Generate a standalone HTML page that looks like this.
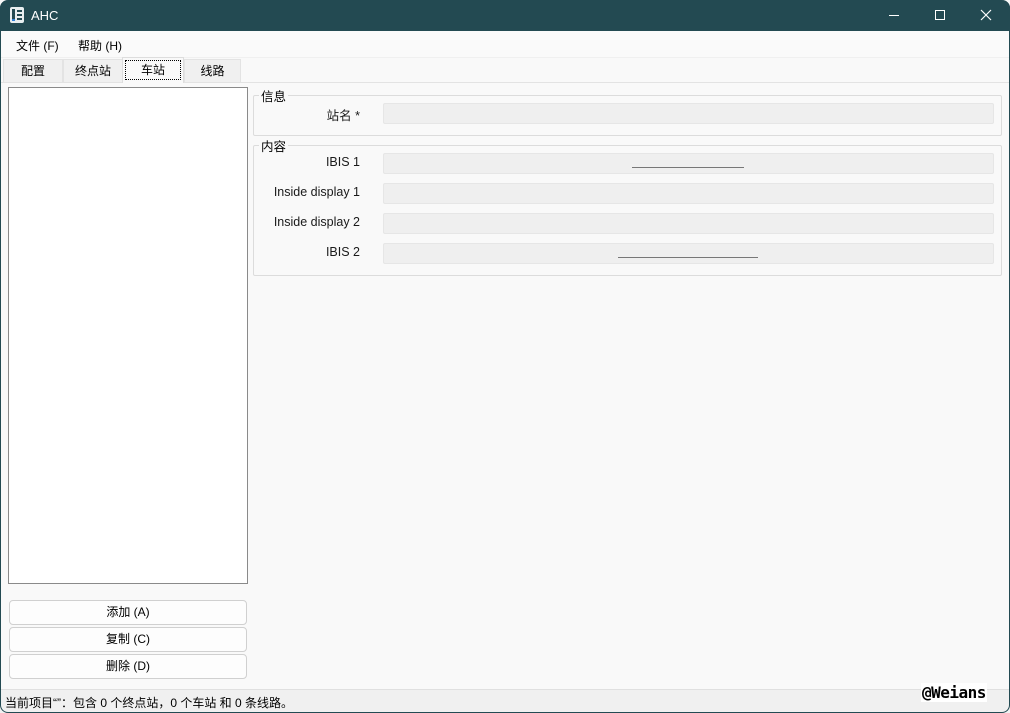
<!DOCTYPE html>
<html><head><meta charset="utf-8"><style>
*{box-sizing:border-box;margin:0;padding:0}
body{width:1010px;height:713px;overflow:hidden;background:#f9f9f9;font-family:"Liberation Sans","Noto Sans CJK SC",sans-serif;font-size:12px;color:#000;position:relative}
.a{position:absolute}
.title{left:0;top:0;width:1010px;height:31px;background:#234a52;color:#fff;border-radius:8px 8px 0 0}
.tab{top:59px;height:23px;background:#f0f0f0;border:1px solid #e3e3e3;border-bottom:none;text-align:center;line-height:22px;font-size:12px}
.field{left:383px;width:611px;height:21px;background:#efefef;border:1px solid #e6e6e6;border-radius:2px}
.lbl{width:110px;left:250px;text-align:right;font-size:12.5px;color:#1a1a1a}
.grp{left:253px;width:749px;border:1px solid #dcdcdc;border-radius:2px}
.gt{background:#f9f9f9;padding:0 2px;font-size:12.5px}
.btn{left:9px;width:238px;height:25px;background:#fdfdfd;border:1px solid #d0d0d0;border-radius:4px;text-align:center;line-height:23px;font-size:12px}
</style></head><body>
<div class="a title">
 <svg class="a" style="left:10px;top:7px" width="14" height="16" viewBox="0 0 14 16"><rect x="0" y="0" width="14" height="16" rx="2" fill="#e8eef0"/><rect x="2" y="2" width="3" height="12" fill="#234a52"/><rect x="7" y="3" width="5" height="2" fill="#234a52"/><rect x="7" y="7" width="5" height="2" fill="#234a52"/><rect x="7" y="11" width="5" height="2" fill="#234a52"/><rect x="2" y="12" width="3" height="2" fill="#2f7fd8"/></svg>
 <div class="a" style="left:31px;top:8px;font-size:13px">AHC</div>
 <div class="a" style="left:889px;top:15px;width:10px;height:1px;background:#fff"></div>
 <div class="a" style="left:935px;top:10px;width:10px;height:10px;border:1px solid #fff"></div>
 <svg class="a" style="left:980px;top:9px" width="12" height="12"><path d="M1 1L11 11M11 1L1 11" stroke="#fff" stroke-width="1.2"/></svg>
</div>
<div class="a" style="left:0;top:31px;width:1010px;height:26px;background:#fafafa"></div>
<div class="a" style="left:16px;top:37px;font-size:12px">文件 (F)</div>
<div class="a" style="left:78px;top:37px;font-size:12px">帮助 (H)</div>
<div class="a" style="left:0;top:57px;width:1010px;height:1px;background:#f0f0f0"></div>
<div class="a" style="left:0;top:82px;width:1010px;height:1px;background:#e3e3e3"></div>
<div class="a tab" style="left:3px;width:60px">配置</div>
<div class="a tab" style="left:63px;width:60px">终点站</div>
<div class="a tab" style="left:122px;width:62px;top:57px;height:26px;background:#f9f9f9;border-color:#ddd"><div style="margin:2px;border:1px dotted #000;line-height:18px">车站</div></div>
<div class="a tab" style="left:184px;width:57px">线路</div>
<div class="a" style="left:8px;top:87px;width:240px;height:497px;background:#fff;border:1px solid #8a8a8a"></div>
<div class="a grp" style="top:95px;height:41px"></div>
<div class="a gt" style="left:259px;top:86px">信息</div>
<div class="a lbl" style="top:105px">站名 *</div>
<div class="a field" style="top:103px"></div>
<div class="a grp" style="top:145px;height:131px"></div>
<div class="a gt" style="left:259px;top:136px">内容</div>
<div class="a lbl" style="top:155px">IBIS 1</div>
<div class="a field" style="top:153px"></div>
<div class="a" style="left:632px;top:167px;width:112px;height:1px;background:#777"></div>
<div class="a lbl" style="top:185px">Inside display 1</div>
<div class="a field" style="top:183px"></div>
<div class="a lbl" style="top:215px">Inside display 2</div>
<div class="a field" style="top:213px"></div>
<div class="a lbl" style="top:245px">IBIS 2</div>
<div class="a field" style="top:243px"></div>
<div class="a" style="left:618px;top:257px;width:140px;height:1px;background:#777"></div>
<div class="a btn" style="top:600px">添加 (A)</div>
<div class="a btn" style="top:627px">复制 (C)</div>
<div class="a btn" style="top:654px">删除 (D)</div>
<div class="a" style="left:0;top:689px;width:1010px;height:1px;background:#e0e0e0"></div>
<div class="a" style="left:0;top:690px;width:1010px;height:23px;background:#f0f0f0"></div>
<div class="a" style="left:5px;top:694px;font-size:12px">当前项目“”：包含 0 个终点站，0 个车站 和 0 条线路。</div>
<div class="a" style="left:921px;top:683px;font-family:'DejaVu Sans Mono',monospace;font-weight:bold;font-size:16px;background:#fff;color:#000;padding:0 1px;letter-spacing:-0.5px">@Weians</div>
<div class="a" style="left:0;top:0;width:1010px;height:713px;border:1px solid #234a52;border-top:none;border-radius:8px;pointer-events:none"></div>
</body></html>
